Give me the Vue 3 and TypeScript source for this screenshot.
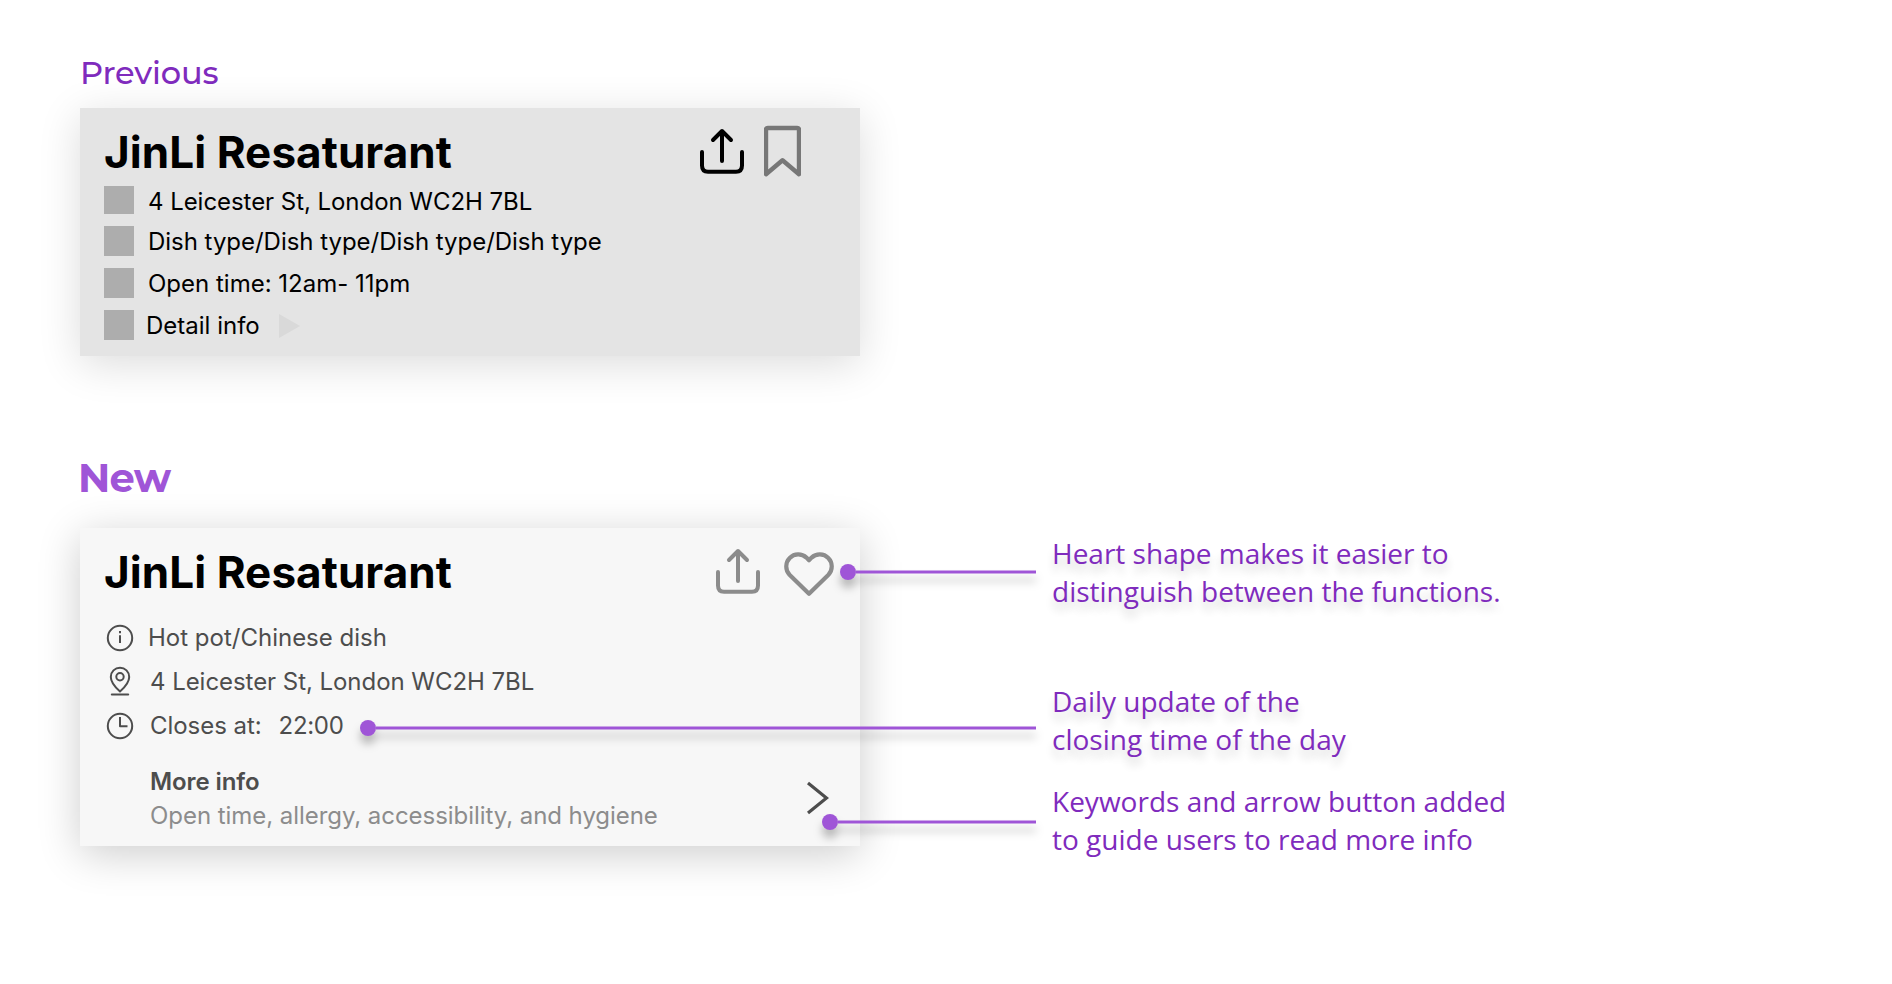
<script setup lang="ts">
import { computed } from 'vue';

interface Note {
  id: string;
  lines: string[];
  shadow: boolean;
}

interface Connector {
  id: string;
  // dot centre, relative to the card
  x: number;
  y: number;
}

const restaurant = 'JinLi Resaturant';
const address = '4 Leicester St, London WC2H 7BL';

const oldRows = [
  { id: 'address', text: address },
  { id: 'dish', text: 'Dish type/Dish type/Dish type/Dish type' },
  { id: 'time', text: 'Open time: 12am- 11pm' },
  { id: 'detail', text: 'Detail info' },
];

const notes: Note[] = [
  {
    id: 'heart',
    lines: ['Heart shape makes it easier to', 'distinguish between the functions.'],
    shadow: true,
  },
  { id: 'closing', lines: ['Daily update of the', 'closing time of the day'], shadow: true },
  {
    id: 'more',
    lines: ['Keywords and arrow button added', 'to guide users to read more info'],
    shadow: false,
  },
];

const connectors: Connector[] = [
  { id: 'heart', x: 768, y: 44 },
  { id: 'closing', x: 288, y: 200 },
  { id: 'more', x: 750, y: 294 },
];

// All connectors end at the same x, just before the notes
const connectorEnd = 956;

const connectorStyles = computed(() =>
  connectors.map(c => ({
    id: c.id,
    style: {
      left: `${c.x - 8}px`,
      top: `${c.y - 8}px`,
      width: `${connectorEnd - c.x + 8}px`,
    },
  }))
);
</script>

<template>
  <main class="board">
    <!-- Previous version -->
    <section class="version">
      <h2 class="label label-previous">Previous</h2>
      <article class="card card-previous">
        <header class="card-header">
          <h1 class="card-title">{{ restaurant }}</h1>
          <div class="actions">
            <svg class="icon-share" viewBox="0 0 44 46" width="44" height="46">
              <path d="M2 24V37.5Q2 43.7 8 43.7H36Q42 43.7 42 37.5V24M22 33V3M13 12L22 3L31 12" />
            </svg>
            <svg class="icon-bookmark" viewBox="0 0 37 52" width="37" height="52">
              <path d="M2 49.2V5Q2 3 4 3H33Q35 3 35 5V49.2L18.5 35.2Z" />
            </svg>
          </div>
        </header>
        <ul class="old-rows">
          <li v-for="row in oldRows" :key="row.id" class="old-row" :class="`old-row-${row.id}`">
            <span class="square"></span>
            <span class="row-text">{{ row.text }}</span>
            <svg v-if="row.id === 'detail'" class="triangle" viewBox="0 0 21 24" width="21" height="24">
              <path d="M0 0L21 12L0 24Z" />
            </svg>
          </li>
        </ul>
      </article>
    </section>

    <!-- New version -->
    <section class="version">
      <h2 class="label label-new">New</h2>
      <div class="annotated">
        <article class="card card-new">
          <header class="card-header">
            <h1 class="card-title">{{ restaurant }}</h1>
            <div class="actions">
              <svg class="icon-share" viewBox="0 0 44 46" width="44" height="46">
                <path d="M2 24V37.5Q2 43.7 8 43.7H36Q42 43.7 42 37.5V24M22 33V3M13 12L22 3L31 12" />
              </svg>
              <svg class="icon-heart" viewBox="0 0 50 46" width="50" height="46">
                <path d="M25 41.8L5.5 22.7A12.03 12.03 0 0 1 22.4 5.6L25 8.2L27.6 5.6A12.03 12.03 0 0 1 44.5 22.7Z" />
              </svg>
            </div>
          </header>

          <ul class="new-rows">
            <li class="new-row">
              <svg class="row-icon" viewBox="0 0 32 32" width="32" height="32">
                <circle cx="16" cy="16" r="12.2" />
                <path class="thin" d="M16 13.2V21M16 9V11.2" />
              </svg>
              <span class="row-text">Hot pot/Chinese dish</span>
            </li>
            <li class="new-row shifted">
              <svg class="row-icon" viewBox="0 0 32 32" width="32" height="32">
                <path d="M16 25.4C14 23.6 6.8 17.4 6.8 10.9A9.2 9.2 0 0 1 25.2 10.9C25.2 17.4 18 23.6 16 25.4Z" />
                <circle cx="16" cy="10.8" r="3.7" />
                <path d="M7.8 28.6H24.2" />
              </svg>
              <span class="row-text">{{ address }}</span>
            </li>
            <li class="new-row shifted">
              <svg class="row-icon" viewBox="0 0 32 32" width="32" height="32">
                <circle cx="16" cy="16" r="12.2" />
                <path class="thin" d="M16 7V16.2H23.5" />
              </svg>
              <span class="row-text">Closes at:</span>
              <span class="row-text closing-time">22:00</span>
            </li>
          </ul>

          <div class="more">
            <div class="more-text">
              <strong class="more-title">More info</strong>
              <span class="more-desc">Open time, allergy, accessibility, and hygiene</span>
            </div>
            <svg class="chevron" viewBox="0 0 22 34" width="22" height="34">
              <path d="M1 2L19.5 17L1 32" />
            </svg>
          </div>

          <div v-for="c in connectorStyles" :key="c.id" class="connector" :style="c.style">
            <span class="dot"></span>
            <span class="line"></span>
          </div>
        </article>

        <aside class="notes">
          <p
            v-for="note in notes"
            :key="note.id"
            class="note"
            :class="[`note-${note.id}`, { shadowed: note.shadow }]"
          >
            <span v-for="line in note.lines" :key="line" class="note-line">{{ line }}</span>
          </p>
        </aside>
      </div>
    </section>
  </main>
</template>

<style>
body {
  margin: 0;
  background: #ffffff;
}
</style>

<style scoped>
.board {
  box-sizing: border-box;
  width: 100%;
  height: 984px;
  padding: 48px 80px 0;
  overflow: hidden;
  background: #ffffff;
  font-family: Inter, 'Liberation Sans', sans-serif;
  color: #000000;
}

h1,
h2,
p,
ul {
  margin: 0;
  padding: 0;
}

ul {
  list-style: none;
}

svg {
  display: block;
  flex: none;
  fill: none;
  stroke-linecap: round;
  stroke-linejoin: round;
}

/* Section labels */
.label {
  font-family: Montserrat, Inter, sans-serif;
  white-space: nowrap;
}

.label-previous {
  height: 60px;
  font-size: 32px;
  font-weight: 500;
  line-height: 50px;
  letter-spacing: -0.1px;
  color: #7f2bbd;
}

.label-new {
  height: 72px;
  margin-top: 100px;
  margin-left: -2px;
  font-size: 40px;
  font-weight: 700;
  line-height: 43px;
  letter-spacing: -0.7px;
  color: #9f55d7;
}

/* Cards */
.card {
  box-sizing: border-box;
  flex: none;
  width: 780px;
  padding: 18px 24px 0;
}

.card-previous {
  height: 248px;
  background: #e4e4e4;
  box-shadow: 0 8px 40px rgba(0, 0, 0, 0.14);
}

.card-new {
  position: relative;
  height: 318px;
  background: #f7f7f7;
  box-shadow: 0 8px 40px rgba(0, 0, 0, 0.2);
}

.card-header {
  display: flex;
  justify-content: space-between;
  height: 60px;
}

.card-title {
  font-size: 44px;
  font-weight: 700;
  line-height: 52px;
  letter-spacing: 0.07px;
  white-space: nowrap;
}

.actions {
  display: flex;
  align-items: flex-start;
}

.card-previous .actions {
  gap: 20px;
  padding-right: 35px;
}

.card-new .actions {
  gap: 24px;
  padding-right: 2px;
}

.icon-share {
  margin-top: 2px;
  stroke: #000000;
  stroke-width: 4;
}

.card-new .icon-share {
  stroke: #8c8c8c;
}

.icon-bookmark {
  margin-top: -1px;
  stroke: #777777;
  stroke-width: 4.4;
}

.icon-heart {
  margin-top: 6px;
  overflow: visible;
  stroke: #8c8c8c;
  stroke-width: 4.2;
}

.row-text {
  font-size: 24px;
  line-height: 32px;
  white-space: nowrap;
}

/* Previous card rows */
.old-rows {
  display: flex;
  flex-direction: column;
  gap: 12px;
}

.old-row {
  display: flex;
  gap: 14px;
  height: 30px;
}

.old-row-address {
  height: 28px;
  letter-spacing: -0.05px;
}

.old-row-dish {
  letter-spacing: -0.03px;
}

.old-row-time {
  font-kerning: none;
}

.old-row-detail {
  gap: 12px;
}

.square {
  width: 30px;
  background: #adadad;
}

.triangle {
  margin: 4px 0 0 7px;
  fill: #d9d9d9;
}

/* New card rows */
.new-rows {
  display: flex;
  flex-direction: column;
  gap: 12px;
  margin-top: 16px;
  color: #4d4d4d;
}

.new-row {
  display: flex;
  gap: 12px;
  height: 32px;
}

.shifted {
  gap: 14px;
  letter-spacing: -0.05px;
}

.row-icon {
  stroke: #4d4d4d;
  stroke-width: 2;
}

.row-icon .thin {
  stroke-width: 2;
  stroke-linecap: butt;
}

.closing-time {
  margin-left: 3px;
  letter-spacing: -0.3px;
}

.more {
  display: flex;
  justify-content: space-between;
  margin-top: 25px;
  padding-left: 46px;
}

.more-text {
  display: flex;
  flex-direction: column;
  gap: 4px;
  font-size: 24px;
  line-height: 30px;
  white-space: nowrap;
}

.more-title {
  font-weight: 600;
  letter-spacing: -0.1px;
  color: #4d4d4d;
}

.more-desc {
  letter-spacing: -0.05px;
  color: #8c8c8c;
}

.chevron {
  margin: 14px 7px 0 0;
  stroke: #4d4d4d;
  stroke-width: 3.2;
  stroke-linecap: butt;
  stroke-linejoin: miter;
}

/* Connectors lie over the card and run out to the notes */
.connector {
  position: absolute;
  display: flex;
  align-items: center;
  height: 16px;
  filter: drop-shadow(0 8px 4px rgba(0, 0, 0, 0.25));
}

.dot {
  width: 16px;
  height: 16px;
  border-radius: 50%;
  background: #9f55d7;
}

.line {
  flex: 1;
  height: 2px;
  border: solid rgba(159, 85, 215, 0.5);
  border-width: 1px 0;
  background: #9f55d7;
  background-clip: padding-box;
}

/* Notes */
.annotated {
  display: flex;
}

.notes {
  margin-left: 192px;
  padding-top: 6px;
  font-family: 'Open Sans', sans-serif;
  font-size: 28px;
  line-height: 38px;
  color: #7f2bbd;
}

.note-closing {
  margin-top: 72px;
}

.note-more {
  margin-top: 24px;
}

.note-line {
  display: block;
  white-space: nowrap;
}

.shadowed {
  text-shadow: 0 8px 8px rgba(0, 0, 0, 0.16);
}
</style>
